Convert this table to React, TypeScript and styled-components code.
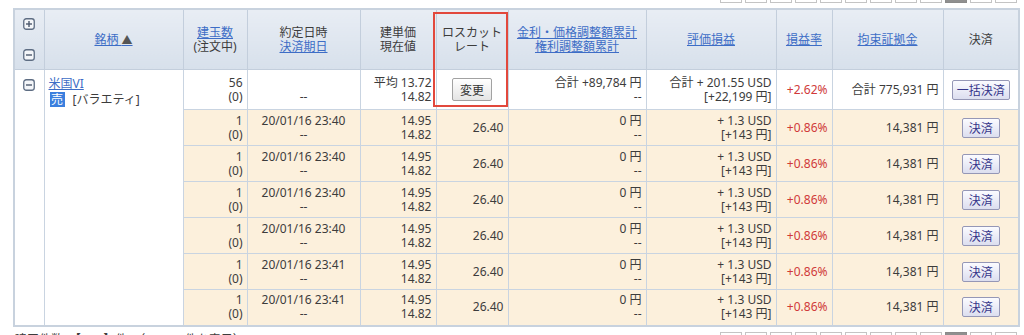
import React from "react";
import styled, { createGlobalStyle } from "styled-components";

const GlobalStyle = createGlobalStyle`
  html, body {
    margin: 0;
    padding: 0;
    background: #fff;
  }
  body {
    font-family: "Noto Sans", "Noto Sans CJK JP", sans-serif;
    font-size: 12px;
    color: #3c3c3c;
    overflow: hidden;
  }
`;

const Page = styled.div`
  box-sizing: border-box;
  width: 1024px;
  height: 335px;
  overflow: hidden;
  padding: 0 6px 0 13px;
`;

const PagerRow = styled.div<{ $top?: boolean }>`
  display: flex;
  justify-content: flex-end;
  gap: 3px;
  margin-right: 1px;
  margin-top: ${(p) => (p.$top ? "-17px" : "0")};
  margin-bottom: ${(p) => (p.$top ? "5px" : "0")};
`;

const PageBox = styled.span<{ $active?: boolean }>`
  box-sizing: border-box;
  width: 22px;
  height: 20px;
  display: flex;
  align-items: center;
  justify-content: center;
  border: 1px solid ${(p) => (p.$active ? "#8a8a8a" : "#c4c4c4")};
  background: ${(p) => (p.$active ? "#8f8f8f" : "#fff")};
  color: ${(p) => (p.$active ? "#fff" : "#555")};
  font-size: 12px;
`;

const TableWrap = styled.div`
  position: relative;
  width: 1005px;
`;

const Highlight = styled.div`
  position: absolute;
  left: 420px;
  top: 4px;
  width: 75px;
  height: 95px;
  box-sizing: border-box;
  border: 2px solid #e2483c;
  pointer-events: none;
`;

const Table = styled.table`
  width: 1005px;
  table-layout: fixed;
  border-collapse: collapse;
  border: 2px solid #c8d2de;
`;

const Th = styled.th`
  height: 59px;
  padding: 0 3px;
  background: linear-gradient(#e8edf4, #d7e0eb);
  border: 1px solid #c3cedc;
  font-weight: normal;
  color: #3c3c3c;
  text-align: center;
  vertical-align: middle;
  line-height: 14px;
`;

const ExpandTh = styled(Th)`
  padding: 0;
`;

const ExpandStack = styled.div`
  display: flex;
  flex-direction: column;
  align-items: flex-start;
  gap: 19px;
  padding-left: 8px;
`;

const HeadLink = styled.a`
  color: #3d6dc6;
  text-decoration: underline;
  cursor: pointer;
`;

const Arrow = styled.span`
  color: #555;
  font-size: 11px;
`;

const Row = styled.tr<{ $sub?: boolean }>`
  height: ${(p) => (p.$sub ? "36px" : "40px")};
  background: ${(p) => (p.$sub ? "#fcf0dc" : "#fff")};
`;

const Td = styled.td<{ $align?: "left" | "center" | "right"; $red?: boolean }>`
  padding: 0 4px;
  border: 1px solid #c9d4e1;
  vertical-align: middle;
  text-align: ${(p) => p.$align || "right"};
  line-height: 14px;
  color: ${(p) => (p.$red ? "#d03a3a" : "#3c3c3c")};
  white-space: nowrap;
`;

const SideTd = styled.td`
  padding: 9px 0 0 8px;
  border: 1px solid #c9d4e1;
  background: #fff;
  vertical-align: top;
`;

const NameTd = styled.td`
  padding: 7px 4px 0;
  border: 1px solid #c9d4e1;
  background: #fff;
  vertical-align: top;
  text-align: left;
  line-height: 14px;
`;

const NameLine = styled.div`
  display: flex;
  align-items: center;
  margin-top: 1px;
`;

const SellBadge = styled.span`
  display: inline-flex;
  align-items: center;
  justify-content: center;
  width: 15px;
  height: 15px;
  background: #3b7fde;
  color: #fff;
  margin-left: 1px;
`;

const Category = styled.span`
  margin-left: 8px;
`;

const Button = styled.button<{ $w: number; $h: number; $blue?: boolean }>`
  box-sizing: border-box;
  width: ${(p) => p.$w}px;
  height: ${(p) => p.$h}px;
  padding: 0;
  font-family: "Noto Sans CJK JP", sans-serif;
  font-size: 12px;
  line-height: 1;
  border-radius: 2px;
  cursor: pointer;
  color: ${(p) => (p.$blue ? "#35358a" : "#333")};
  border: 1px solid ${(p) => (p.$blue ? "#9597b6" : "#a2a2a2")};
  background: ${(p) =>
    p.$blue
      ? "linear-gradient(#fbfbff, #dcdeef)"
      : "linear-gradient(#ffffff, #e4e4e4)"};
`;

const Footer = styled.div`
  display: flex;
  justify-content: space-between;
  align-items: flex-start;
  margin-top: 5px;
`;

const Count = styled.div`
  padding-left: 2px;
  font-size: 12px;
  line-height: 14px;
  b {
    font-size: 13px;
  }
`;

function BoxIcon({ plus }: { plus?: boolean }) {
  return (
    <svg width="12" height="12" viewBox="0 0 12 12" style={{ display: "block" }}>
      <rect x="0.75" y="0.75" width="10.5" height="10.5" rx="2.5" fill="#f4f6f9" stroke="#5e6d83" strokeWidth="1.3" />
      <line x1="3" y1="6" x2="9" y2="6" stroke="#4c5a6e" strokeWidth="1.4" />
      {plus && <line x1="6" y1="3" x2="6" y2="9" stroke="#4c5a6e" strokeWidth="1.4" />}
    </svg>
  );
}

function Pager({ top }: { top?: boolean }) {
  const pages = ["«", "‹", "1", "2", "3", "4", "5", "6", "7", "8", "›", "»"];
  return (
    <PagerRow $top={top}>
      {pages.map((p, i) => (
        <PageBox key={i} $active={i === 9}>
          {p}
        </PageBox>
      ))}
    </PagerRow>
  );
}

const positions = [
  "20/01/16 23:40",
  "20/01/16 23:40",
  "20/01/16 23:40",
  "20/01/16 23:40",
  "20/01/16 23:41",
  "20/01/16 23:41",
];

export default function App() {
  return (
    <>
      <GlobalStyle />
      <Page>
        <Pager top />
        <TableWrap>
          <Table>
            <colgroup>
              <col style={{ width: 30 }} />
              <col style={{ width: 139 }} />
              <col style={{ width: 64 }} />
              <col style={{ width: 113 }} />
              <col style={{ width: 76 }} />
              <col style={{ width: 72 }} />
              <col style={{ width: 138 }} />
              <col style={{ width: 130 }} />
              <col style={{ width: 56 }} />
              <col style={{ width: 111 }} />
              <col style={{ width: 76 }} />
            </colgroup>
            <thead>
              <tr>
                <ExpandTh>
                  <ExpandStack>
                    <BoxIcon plus />
                    <BoxIcon />
                  </ExpandStack>
                </ExpandTh>
                <Th>
                  <HeadLink>
                    銘柄 <Arrow>▲</Arrow>
                  </HeadLink>
                </Th>
                <Th>
                  <HeadLink>建玉数</HeadLink>
                  <br />
                  (注文中)
                </Th>
                <Th>
                  約定日時
                  <br />
                  <HeadLink>決済期日</HeadLink>
                </Th>
                <Th>
                  建単価
                  <br />
                  現在値
                </Th>
                <Th>
                  ロスカット
                  <br />
                  レート
                </Th>
                <Th>
                  <HeadLink>金利・価格調整額累計</HeadLink>
                  <br />
                  <HeadLink>権利調整額累計</HeadLink>
                </Th>
                <Th>
                  <HeadLink>評価損益</HeadLink>
                </Th>
                <Th>
                  <HeadLink>損益率</HeadLink>
                </Th>
                <Th>
                  <HeadLink>拘束証拠金</HeadLink>
                </Th>
                <Th>決済</Th>
              </tr>
            </thead>
            <tbody>
              <Row>
                <SideTd rowSpan={7}>
                  <BoxIcon />
                </SideTd>
                <NameTd rowSpan={7}>
                  <HeadLink>米国VI</HeadLink>
                  <NameLine>
                    <SellBadge>売</SellBadge>
                    <Category>[バラエティ]</Category>
                  </NameLine>
                </NameTd>
                <Td>
                  56
                  <br />
                  (0)
                </Td>
                <Td $align="center">
                  &nbsp;
                  <br />
                  --
                </Td>
                <Td>
                  平均 13.72
                  <br />
                  14.82
                </Td>
                <Td $align="center">
                  <Button $w={40} $h={23}>変更</Button>
                </Td>
                <Td>
                  合計 +89,784 円
                  <br />
                  --
                </Td>
                <Td>
                  合計 + 201.55 USD
                  <br />
                  [+22,199 円]
                </Td>
                <Td $red>+2.62%</Td>
                <Td>合計 775,931 円</Td>
                <Td $align="center">
                  <Button $w={58} $h={20} $blue>
                    一括決済
                  </Button>
                </Td>
              </Row>
              {positions.map((t, i) => (
                <Row $sub key={i}>
                  <Td>
                    1
                    <br />
                    (0)
                  </Td>
                  <Td $align="center">
                    {t}
                    <br />
                    --
                  </Td>
                  <Td>
                    14.95
                    <br />
                    14.82
                  </Td>
                  <Td>26.40</Td>
                  <Td>
                    0 円
                    <br />
                    --
                  </Td>
                  <Td>
                    + 1.3 USD
                    <br />
                    [+143 円]
                  </Td>
                  <Td $red>+0.86%</Td>
                  <Td>14,381 円</Td>
                  <Td $align="center">
                    <Button $w={38} $h={20} $blue>
                      決済
                    </Button>
                  </Td>
                </Row>
              ))}
            </tbody>
          </Table>
          <Highlight />
        </TableWrap>
        <Footer>
          <Count>
            建玉件数：【<b>131</b>】件　（1〜131件を表示）
          </Count>
          <Pager />
        </Footer>
      </Page>
    </>
  );
}
